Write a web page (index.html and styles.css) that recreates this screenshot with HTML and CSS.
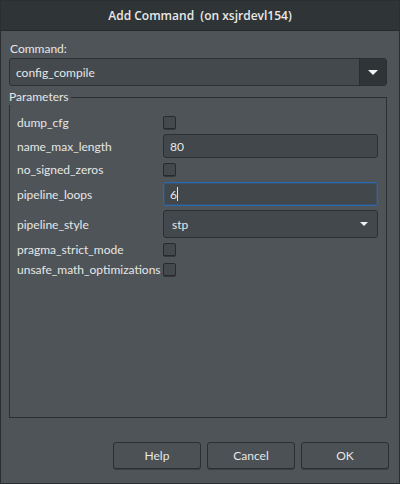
FILE: index.html
```html
<!DOCTYPE html>
<html>
<head>
<meta charset="utf-8">
<link rel="stylesheet" href="styles.css">
</head>
<body>
<div class="window">
  <div class="titlebar">Add Command&nbsp; (on xsjrdevl154)</div>
  <div class="content">
    <div class="cmd-label">Command:</div>
    <div class="combo main-combo">
      <div class="combo-text">config_compile</div>
      <div class="combo-btn"><span class="tri"></span></div>
    </div>
    <div class="frame">
      <div class="frame-label">Parameters</div>
      <div class="params">
        <div class="row r-check1"><span class="lbl">dump_cfg</span><span class="check"></span></div>
        <div class="row r-entry"><span class="lbl">name_max_length</span><span class="entry">80</span></div>
        <div class="row r-check"><span class="lbl">no_signed_zeros</span><span class="check"></span></div>
        <div class="row r-entry2"><span class="lbl">pipeline_loops</span><span class="entry focus">6<span class="caret"></span></span></div>
        <div class="row r-combo"><span class="lbl">pipeline_style</span><span class="entry pcombo">stp<span class="tri small"></span></span></div>
        <div class="row r-check2"><span class="lbl">pragma_strict_mode</span><span class="check"></span></div>
        <div class="row r-check3"><span class="lbl">unsafe_math_optimizations</span><span class="check"></span></div>
      </div>
    </div>
    <div class="buttons">
      <div class="btn">Help</div>
      <div class="btn">Cancel</div>
      <div class="btn">OK</div>
    </div>
  </div>
</div>
</body>
</html>
```
FILE: styles.css
```css
* { box-sizing: border-box; }
html, body { margin: 0; padding: 0; background: #2b3033; }
body { width: 400px; height: 484px; font-family: "Lato", "Open Sans", sans-serif; font-size: 12px; color: #e6e7e6; }
.window {
  width: 400px; height: 484px;
  background: #4f5458;
  border: 1px solid #2a2e31;
  border-radius: 6px 6px 0 0;
  display: flex; flex-direction: column;
  overflow: hidden;
}
.titlebar {
  height: 30px; flex: none;
  background: #2f3437;
  border-bottom: 1px solid #25292c;
  display: flex; align-items: center; justify-content: center;
  font-family: "Open Sans", sans-serif;
  font-size: 12px; color: #e8e8e7; font-weight: 600;
}
.content { flex: 1; padding: 9px 12px 0 8px; display: flex; flex-direction: column; }
.cmd-label { height: 18px; line-height: 18px; margin-left: 1px; }
.combo {
  display: flex; height: 28px;
  border: 1px solid #2c3033; border-radius: 3px;
  background: #44494d;
  overflow: hidden;
}
.combo-text { flex: 1; padding-left: 6px; display: flex; align-items: center; }
.combo-btn {
  width: 27px; background: #2f3437; border-left: 1px solid #2a2e31;
  display: flex; align-items: center; justify-content: center;
}
.tri { width: 0; height: 0; border-left: 5px solid transparent; border-right: 5px solid transparent; border-top: 5px solid #f2f2f2; display: inline-block; }
.frame {
  position: relative;
  margin-top: 11px;
  height: 321px;
  border: 1px solid #2b2f32;
}
.frame-label {
  position: absolute; top: -9px; left: -2px;
  background: #4f5458; padding: 0 2px 0 1px; line-height: 16px;
}
.params { padding: 16px 8px 0 7px; display: flex; flex-direction: column; }
.row { display: flex; align-items: center; }
.lbl { width: 146px; flex: none; white-space: nowrap; }
.check {
  width: 13px; height: 13px; border: 1px solid #272b2e; border-radius: 2px;
  background: #44494d; box-shadow: 0 1px 0 #33383b; flex: none;
}
.r-check1 { height: 16px; }
.r-entry { height: 24px; margin-top: 4px; }
.r-check { height: 16px; margin-top: 3px; }
.r-entry2 { height: 24px; margin-top: 5px; }
.r-combo { height: 28px; margin-top: 4px; }
.r-check2 { height: 16px; margin-top: 3px; }
.r-check3 { height: 16px; margin-top: 4px; }
.entry {
  flex: 1; height: 100%;
  background: #42474b; border: 1px solid #2c3033; border-radius: 3px;
  display: flex; align-items: center; padding-left: 6px;
}
.entry.focus { border: 1px solid #2a69b0; box-shadow: inset 0 0 0 1px rgba(42,105,176,0.35); }
.caret { width: 1px; height: 14px; background: #e6e7e6; }
.pcombo { justify-content: space-between; padding-right: 9px; padding-left: 8px; background: #43484c; }
.tri.small { border-left-width: 4px; border-right-width: 4px; border-top-width: 4px; }
.buttons { display: flex; justify-content: flex-end; gap: 6px; margin-top: 24px; margin-right: -2px; }
.btn {
  width: 88px; height: 27px;
  border: 1px solid #2b2f32; border-radius: 3px;
  background: #4c5155;
  box-shadow: 0 1px 0 #3a3f42;
  display: flex; align-items: center; justify-content: center;
}
```
